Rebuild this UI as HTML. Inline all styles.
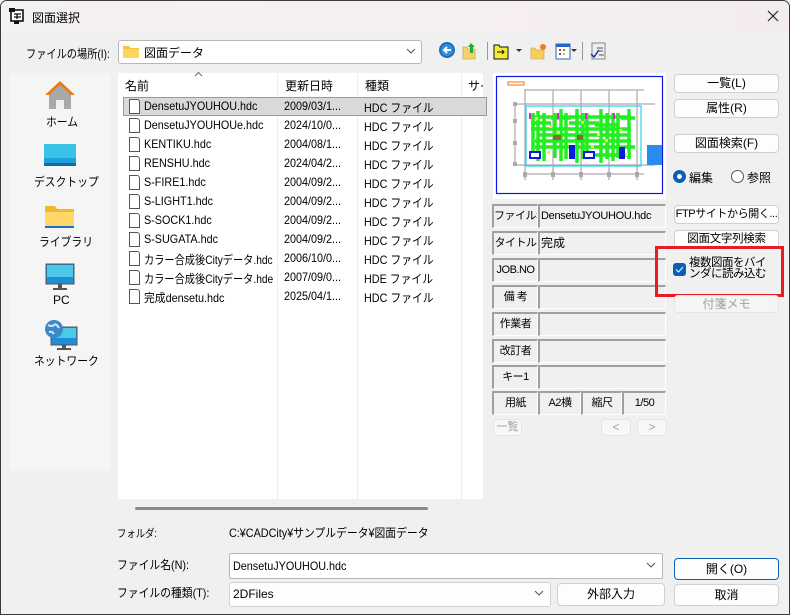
<!DOCTYPE html>
<html><head><meta charset="utf-8"><style>
*{margin:0;padding:0;box-sizing:border-box}
body{width:790px;height:615px;overflow:hidden;font-family:"Liberation Sans","Noto Sans CJK JP",sans-serif;font-size:12px;color:#000;background:#f0f0f0;position:relative}
.a{position:absolute;white-space:nowrap}
.n{transform:scaleX(.9);transform-origin:left center}
.win{position:absolute;left:0;top:0;width:790px;height:615px;border:1px solid #3a3a3a;border-radius:7px 7px 0 0;overflow:hidden;background:#f0f0f0}
.title{position:absolute;left:0;top:0;width:790px;height:31px;background:linear-gradient(90deg,#f4f1f3,#f6efef 60%,#f3ecef)}
.btn{position:absolute;background:#fdfdfd;border:1px solid #d0d0d0;border-radius:4px;text-align:center;font-size:12px;line-height:17px;white-space:nowrap;overflow:hidden}
.cell{position:absolute;background:#f0f0f0;border-top:2px solid #a0a0a0;border-left:2px solid #a0a0a0;border-right:1px solid #fff;border-bottom:1px solid #fff;font-size:12px;line-height:20px;white-space:nowrap;overflow:hidden}
.lab{text-align:center;font-size:11px;letter-spacing:-.5px}
.fi{position:absolute;width:11px;height:15px;border:1px solid #555;background:#fff;border-radius:0 3px 0 0}
</style></head><body>
<div class="win">
<div class="title"></div>
<svg class="a" style="left:7px;top:6px" width="18" height="18" viewBox="0 0 18 18"><rect x="3" y="3" width="12" height="11" fill="#fff" stroke="#111" stroke-width="1.6"/><rect x="1" y="1" width="6" height="4" fill="#111"/><path d="M6 7h7M6 10h7M9 7v5" stroke="#111" stroke-width="1.3"/><rect x="6" y="14" width="5" height="3" fill="#111"/></svg>
<div class="a" style="left:31px;top:8px;font-size:12px">図面選択</div>
<svg class="a" style="left:766px;top:9px" width="12" height="12"><path d="M1 1L11 11M11 1L1 11" stroke="#222" stroke-width="1.2"/></svg>

<div class="a n" style="left:25px;top:44px;transform:scaleX(.85)">ファイルの場所(I):</div>
<div class="a" style="left:117px;top:39px;width:304px;height:24px;background:#fff;border:1px solid #b8b8b8;border-radius:3px"></div>
<svg class="a" style="left:122px;top:43px" width="16" height="14"><path d="M0 2h6l1.5 2H16v10H0z" fill="#f4c542"/><path d="M0 5h16v9H0z" fill="#ffd65c"/></svg>
<div class="a" style="left:143px;top:43px">図面データ</div>
<svg class="a" style="left:405px;top:47px" width="10" height="7"><path d="M1 1l4 4 4-4" stroke="#555" fill="none"/></svg>
<svg class="a" style="left:436px;top:38px" width="180" height="22">
<circle cx="10" cy="11" r="8" fill="#1f6fbf"/><circle cx="10" cy="11" r="6" fill="#2f8ee0"/><path d="M14 11H7M10 8l-3 3 3 3" stroke="#fff" stroke-width="2" fill="none"/>
<path d="M26 8h4l1 2h7v10H26z" fill="#f3d46a" stroke="#b89a30" stroke-width=".6"/><path d="M34 4l4 4h-2v6h-3V8h-2z" fill="#2ea52e"/>
<rect x="50" y="3" width="1" height="18" fill="#999"/>
<path d="M57 6h5l1 2h8v12H57z" fill="#f5ec3a" stroke="#111"/><path d="M60 13h7M65 11l2 2-2 2" stroke="#111" fill="none"/>
<path d="M79 10h6l-3 3z" fill="#333"/>
<path d="M94 9h4l1 2h8v9H94z" fill="#f3cf5c" stroke="#c9a13a" stroke-width=".6"/><circle cx="106" cy="8" r="3" fill="#f57d1f"/>
<rect x="119" y="5" width="14" height="15" fill="#fff" stroke="#2a64c4"/><rect x="119" y="5" width="14" height="3" fill="#2a64c4"/><rect x="122" y="10" width="2" height="2" fill="#e33"/><rect x="126" y="10" width="2" height="2" fill="#3a3"/><rect x="122" y="14" width="2" height="2" fill="#36c"/><rect x="126" y="14" width="2" height="2" fill="#fb0"/>
<path d="M134 10h6l-3 3z" fill="#333"/>
<rect x="145" y="3" width="1" height="18" fill="#999"/>
<rect x="155" y="4" width="13" height="16" fill="#eee" stroke="#888"/><path d="M154 15l3 3 5-7" stroke="#1a2bb0" stroke-width="1.5" fill="none"/><path d="M160 9h6M160 12h6M162 16h5" stroke="#555"/>
</svg>

<div class="a" style="left:8px;top:72px;width:102px;height:398px;background:#f5f5f5"></div>
<svg class="a" style="left:42px;top:78px" width="34" height="32"><path d="M17 2L2 16h4v14h22V16h4z" fill="#ea7a12"/><path d="M6 16L17 6l11 10v14H6z" fill="#a9a9a9"/><path d="M13 30v-9h8v9z" fill="#f0f0f0"/></svg>
<div class="a n" style="left:45px;top:112px">ホーム</div>
<svg class="a" style="left:42px;top:142px" width="34" height="26"><rect x="1" y="1" width="32" height="22" rx="2" fill="#1f9fd8"/><rect x="1" y="1" width="32" height="14" fill="#38c3e6"/><rect x="1" y="20" width="32" height="3" fill="#1467a8"/></svg>
<div class="a n" style="left:33px;top:172px">デスクトップ</div>
<svg class="a" style="left:44px;top:203px" width="30" height="25"><path d="M0 2h10l2 3h17v19H0z" fill="#f1b82a"/><path d="M0 8h29v15H0z" fill="#fdd868"/><rect x="0" y="22" width="29" height="2" fill="#1d6fc4"/></svg>
<div class="a n" style="left:38px;top:232px">ライブラリ</div>
<svg class="a" style="left:44px;top:262px" width="30" height="28"><rect x="1" y="1" width="28" height="20" fill="#1e8fd4" stroke="#555"/><rect x="2" y="2" width="26" height="12" fill="#4cc9ea"/><rect x="13" y="21" width="4" height="4" fill="#555"/><rect x="8" y="25" width="14" height="2" fill="#555"/></svg>
<div class="a" style="left:52px;top:292px">PC</div>
<svg class="a" style="left:42px;top:318px" width="36" height="32"><rect x="8" y="8" width="26" height="18" fill="#1e8fd4" stroke="#555"/><rect x="9" y="9" width="24" height="10" fill="#4cc9ea"/><rect x="19" y="26" width="4" height="3" fill="#555"/><rect x="14" y="29" width="14" height="2" fill="#555"/><circle cx="11" cy="10" r="9" fill="#3a88c6"/><path d="M5 6q4 2 6 0t5 3M6 13q3-1 5 2" stroke="#cfe8f8" stroke-width="2" fill="none"/></svg>
<div class="a n" style="left:33px;top:351px">ネットワーク</div>

<div class="a" style="left:117px;top:72px;width:365px;height:426px;background:#fff"></div>
<div class="a" style="left:276px;top:72px;width:1px;height:426px;background:#e8eef4"></div>
<div class="a" style="left:356px;top:72px;width:1px;height:426px;background:#e8eef4"></div>
<div class="a" style="left:460px;top:72px;width:1px;height:426px;background:#e8eef4"></div>
<svg class="a" style="left:193px;top:70px" width="9" height="6"><path d="M1 5l3.5-3.5L8 5" stroke="#666" fill="none"/></svg>
<div class="a" style="left:124px;top:76px">名前</div>
<div class="a" style="left:284px;top:76px">更新日時</div>
<div class="a" style="left:364px;top:76px">種類</div>
<div class="a" style="left:467px;top:76px;width:15px;overflow:hidden">サイ</div>
<div class="a" style="left:122px;top:96px;width:364px;height:19px;background:#d9d9d9;border:1px solid #9a9a9a"></div>
<div class="a" style="left:134px;top:506px;width:293px;height:3px;background:#8a8a8a;border-radius:2px"></div>

<div class="a" style="left:492px;top:72px;width:173px;height:126px;background:#fff"></div>
<svg class="a" style="left:490px;top:72px" width="175" height="128" viewBox="0 0 175 128">
<rect x="5.5" y="3.5" width="166" height="117" fill="none" stroke="#0a1ae0" stroke-width="1.2"/>
<rect x="17" y="9" width="16" height="3" fill="none" stroke="#f07010"/>
<g stroke="#aaa" stroke-width="1.2" fill="none"><path d="M33 17h120M33 101h120M24 31h140M24 92h140M34 17v90M62 17v90M90 17v90M118 17v90M146 17v90M24 31v62"/></g>
<g fill="#aaa"><rect x="32" y="99" width="4" height="5"/><rect x="60" y="99" width="4" height="5"/><rect x="88" y="99" width="4" height="5"/><rect x="116" y="99" width="4" height="5"/><rect x="144" y="99" width="4" height="5"/><rect x="22" y="29" width="4" height="4"/><rect x="22" y="46" width="4" height="4"/><rect x="22" y="68" width="4" height="4"/><rect x="22" y="89" width="4" height="4"/></g>
<rect x="35" y="33" width="115" height="60" fill="none" stroke="#22d5e8" stroke-width="1.2"/>
<g stroke="#22ee22" stroke-width="3.5" fill="none"><path d="M42 40v45M47 38v50M53 40v48M60 45h20M64 40v45M70 36v52M75 40v46M78 50h30M86 36v54M92 40v46M96 40v45M104 52h24M110 36v54M116 40v46M122 40v48M127 40v45M130 45h14M138 36v50M48 62h90M44 74h100M40 50h20M100 82h40M40 56h100M44 68h96M40 44h100"/></g>
<g fill="#ffef10"><rect x="44" y="44" width="3" height="3"/><rect x="66" y="58" width="3" height="3"/><rect x="90" y="48" width="3" height="3"/><rect x="114" y="66" width="3" height="3"/><rect x="128" y="56" width="3" height="3"/><rect x="56" y="78" width="3" height="3"/><rect x="100" y="72" width="3" height="3"/><rect x="134" y="80" width="3" height="3"/><rect x="58" y="52" width="3" height="3"/><rect x="106" y="60" width="3" height="3"/></g>
<g fill="#e020e0"><rect x="38" y="40" width="2" height="6"/><rect x="66" y="40" width="2" height="6"/><rect x="94" y="40" width="2" height="6"/><rect x="122" y="40" width="2" height="6"/></g>
<g fill="#0a1ae0"><rect x="38" y="78" width="12" height="8"/><rect x="78" y="72" width="6" height="14"/><rect x="92" y="78" width="12" height="8"/><rect x="128" y="74" width="6" height="12"/></g>
<rect x="40" y="80" width="8" height="4" fill="#fff"/><rect x="94" y="80" width="8" height="4" fill="#fff"/>
<rect x="156" y="72" width="15" height="20" fill="#2a8cf0"/>
<g fill="#8a6a30"><rect x="62" y="62" width="8" height="5"/><rect x="86" y="62" width="6" height="5"/></g>
</svg>
<div class="cell lab" style="left:491px;top:203px;width:46px;height:24px">ファイル名</div><div class="cell" style="left:537px;top:203px;width:128px;height:24px;padding-left:1px;font-size:11px;letter-spacing:-.3px">DensetuJYOUHOU.hdc</div>
<div class="cell lab" style="left:491px;top:230px;width:46px;height:24px">タイトル</div><div class="cell" style="left:537px;top:230px;width:128px;height:24px;padding-left:1px">完成</div>
<div class="cell lab" style="left:491px;top:257px;width:46px;height:24px">JOB.NO</div><div class="cell" style="left:537px;top:257px;width:128px;height:24px"></div>
<div class="cell lab" style="left:491px;top:284px;width:46px;height:24px">備 考</div><div class="cell" style="left:537px;top:284px;width:128px;height:24px"></div>
<div class="cell lab" style="left:491px;top:311px;width:46px;height:24px">作業者</div><div class="cell" style="left:537px;top:311px;width:128px;height:24px"></div>
<div class="cell lab" style="left:491px;top:338px;width:46px;height:24px">改訂者</div><div class="cell" style="left:537px;top:338px;width:128px;height:24px"></div>
<div class="cell lab" style="left:491px;top:364px;width:46px;height:24px">キー1</div><div class="cell" style="left:537px;top:364px;width:128px;height:24px"></div>
<div class="cell lab" style="left:491px;top:390px;width:46px;height:24px">用紙</div><div class="cell lab" style="left:537px;top:390px;width:43px;height:24px">A2横</div><div class="cell lab" style="left:580px;top:390px;width:41px;height:24px">縮尺</div><div class="cell lab" style="left:621px;top:390px;width:44px;height:24px">1/50</div>
<div class="btn" style="left:492px;top:418px;width:29px;height:17px;color:#a0a0a0;border-color:#e4e4e4;background:#f7f7f7;line-height:15px;font-size:11px">一覧</div>
<div class="btn" style="left:600px;top:418px;width:30px;height:17px;color:#a0a0a0;border-color:#e4e4e4;background:#f7f7f7;line-height:15px">&lt;</div>
<div class="btn" style="left:636px;top:418px;width:30px;height:17px;color:#a0a0a0;border-color:#e4e4e4;background:#f7f7f7;line-height:15px">&gt;</div>

<div class="btn" style="left:673px;top:73px;width:105px;height:19px">一覧(L)</div>
<div class="btn" style="left:673px;top:98px;width:105px;height:19px">属性(R)</div>
<div class="btn" style="left:673px;top:133px;width:105px;height:19px">図面検索(F)</div>
<div class="a" style="left:672px;top:169px;width:13px;height:13px;border-radius:50%;background:#0a5fb4"></div><div class="a" style="left:676px;top:173px;width:5px;height:5px;border-radius:50%;background:#fff"></div>
<div class="a" style="left:688px;top:168px">編集</div>
<div class="a" style="left:730px;top:169px;width:13px;height:13px;border-radius:50%;border:1px solid #555;background:#fff"></div>
<div class="a" style="left:746px;top:168px">参照</div>
<div class="btn" style="left:673px;top:204px;width:105px;height:19px;font-size:11px;letter-spacing:-.4px">FTPサイトから開く...</div>
<div class="btn" style="left:673px;top:229px;width:105px;height:19px;font-size:11.5px;letter-spacing:-.3px">図面文字列検索</div>
<div class="a" style="left:654px;top:245px;width:129px;height:51px;border:3px solid #e81c24"></div>
<div class="a" style="left:672px;top:262px;width:13px;height:13px;border-radius:3px;background:#0a5fb4"></div>
<svg class="a" style="left:674px;top:265px" width="9" height="7"><path d="M1 3.5l2.5 2.5L8 1" stroke="#fff" fill="none"/></svg>
<div class="a" style="left:688px;top:257px;font-size:11.5px;line-height:11px;letter-spacing:-.5px">複数図面をバイ<br>ンダに読み込む</div>
<div class="btn" style="left:673px;top:294px;width:105px;height:18px;color:#a0a0a0;background:#f5f5f5;border-color:#e4e4e4;line-height:16px">付箋メモ</div>

<div class="a" style="left:116px;top:524px;font-size:11px;transform:scaleX(.85);transform-origin:left">フォルダ:</div>
<div class="a n" style="left:228px;top:523px">C:¥CADCity¥サンプルデータ¥図面データ</div>
<div class="a n" style="left:116px;top:555px">ファイル名(N):</div>
<div class="a" style="left:228px;top:552px;width:434px;height:26px;background:#fff;border:1px solid #b8b8b8;border-radius:2px"></div>
<div class="a n" style="left:232px;top:558px">DensetuJYOUHOU.hdc</div>
<svg class="a" style="left:645px;top:561px" width="10" height="7"><path d="M1 1l4 4 4-4" stroke="#555" fill="none"/></svg>
<div class="a n" style="left:116px;top:583px">ファイルの種類(T):</div>
<div class="a" style="left:228px;top:581px;width:322px;height:25px;background:#fdfdfd;border:1px solid #d0d0d0;border-radius:3px"></div>
<div class="a" style="left:232px;top:586px">2DFiles</div>
<svg class="a" style="left:533px;top:589px" width="10" height="7"><path d="M1 1l4 4 4-4" stroke="#555" fill="none"/></svg>
<div class="btn" style="left:556px;top:582px;width:108px;height:23px;line-height:21px">外部入力</div>
<div class="btn" style="left:673px;top:557px;width:105px;height:22px;line-height:20px;border-color:#0a5fb4">開く(O)</div>
<div class="btn" style="left:673px;top:583px;width:105px;height:22px;line-height:20px">取消</div>

<div class="fi" style="left:128px;top:98px"></div><div class="a n" style="left:143px;top:98px">DensetuJYOUHOU.hdc</div><div class="a n" style="left:283px;top:98px">2009/03/1...</div><div class="a n" style="left:363px;top:98px">HDC ファイル</div>
<div class="fi" style="left:128px;top:117px"></div><div class="a n" style="left:143px;top:117px">DensetuJYOUHOUe.hdc</div><div class="a n" style="left:283px;top:117px">2024/10/0...</div><div class="a n" style="left:363px;top:117px">HDC ファイル</div>
<div class="fi" style="left:128px;top:136px"></div><div class="a n" style="left:143px;top:136px">KENTIKU.hdc</div><div class="a n" style="left:283px;top:136px">2004/08/1...</div><div class="a n" style="left:363px;top:136px">HDC ファイル</div>
<div class="fi" style="left:128px;top:155px"></div><div class="a n" style="left:143px;top:155px">RENSHU.hdc</div><div class="a n" style="left:283px;top:155px">2024/04/2...</div><div class="a n" style="left:363px;top:155px">HDC ファイル</div>
<div class="fi" style="left:128px;top:174px"></div><div class="a n" style="left:143px;top:174px">S-FIRE1.hdc</div><div class="a n" style="left:283px;top:174px">2004/09/2...</div><div class="a n" style="left:363px;top:174px">HDC ファイル</div>
<div class="fi" style="left:128px;top:193px"></div><div class="a n" style="left:143px;top:193px">S-LIGHT1.hdc</div><div class="a n" style="left:283px;top:193px">2004/09/2...</div><div class="a n" style="left:363px;top:193px">HDC ファイル</div>
<div class="fi" style="left:128px;top:212px"></div><div class="a n" style="left:143px;top:212px">S-SOCK1.hdc</div><div class="a n" style="left:283px;top:212px">2004/09/2...</div><div class="a n" style="left:363px;top:212px">HDC ファイル</div>
<div class="fi" style="left:128px;top:231px"></div><div class="a n" style="left:143px;top:231px">S-SUGATA.hdc</div><div class="a n" style="left:283px;top:231px">2004/09/2...</div><div class="a n" style="left:363px;top:231px">HDC ファイル</div>
<div class="fi" style="left:128px;top:250px"></div><div class="a" style="left:143px;top:250px;transform:scaleX(.85);transform-origin:left">カラー合成後Cityデータ.hdc</div><div class="a n" style="left:283px;top:250px">2006/10/0...</div><div class="a n" style="left:363px;top:250px">HDC ファイル</div>
<div class="fi" style="left:128px;top:269px"></div><div class="a" style="left:143px;top:269px;transform:scaleX(.85);transform-origin:left">カラー合成後Cityデータ.hde</div><div class="a n" style="left:283px;top:269px">2007/09/0...</div><div class="a n" style="left:363px;top:269px">HDE ファイル</div>
<div class="fi" style="left:128px;top:288px"></div><div class="a n" style="left:143px;top:288px">完成densetu.hdc</div><div class="a n" style="left:283px;top:288px">2025/04/1...</div><div class="a n" style="left:363px;top:288px">HDC ファイル</div>
</div>
</body></html>
